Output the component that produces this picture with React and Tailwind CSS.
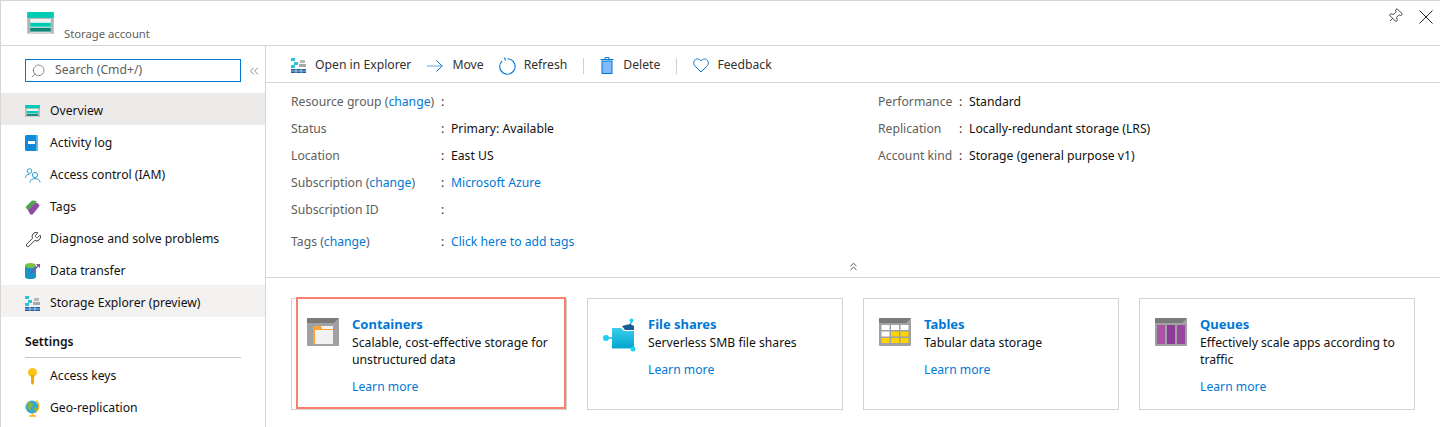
import React from "react";
import { Search, ChevronsLeft, ChevronsUp, Pin, Wrench } from "lucide-react";

const font = "font-['Noto_Sans','Open_Sans',sans-serif]";

function StorageIcon({ size = 27 }) {
  return (
    <svg width={size} height={size * 0.8} viewBox="0 0 27 22" className="block">
      <rect x="0" y="1" width="27" height="21" fill="#b3b3b3" />
      <rect x="0" y="0" width="27" height="6" fill="#00ccb4" />
      <rect x="3" y="7" width="21" height="14" fill="#f2f2f2" />
      <rect x="3" y="11" width="21" height="4" fill="#00ccb4" />
      <rect x="3" y="16" width="21" height="4" fill="#11867a" />
    </svg>
  );
}

function ExplorerIcon() {
  return (
    <svg width="15" height="15" viewBox="0 0 15 15" className="block">
      <rect x="0" y="0" width="4" height="3" fill="#32bedd" />
      <rect x="3" y="4" width="4" height="3" fill="#32bedd" />
      <rect x="0" y="7" width="4" height="3" fill="#32bedd" />
      <rect x="9" y="2" width="5" height="3" fill="#b8b8b8" />
      <rect x="8" y="6" width="7" height="3" fill="#a8a8a8" />
      <rect x="0" y="11" width="15" height="4" fill="#1f5fa8" />
      <path d="M5 11v4M10 11v4M0 13h15" stroke="#fff" strokeWidth="0.6" />
    </svg>
  );
}

function ActivityIcon() {
  return (
    <svg width="13" height="16" viewBox="0 0 13 16" className="block">
      <rect x="0" y="0" width="13" height="16" rx="1.5" fill="#0f8ad8" />
      <rect x="11" y="0" width="2" height="16" fill="#5cb6ec" />
      <rect x="3" y="6" width="7" height="3" fill="#fff" />
    </svg>
  );
}

function UsersIcon() {
  return (
    <svg width="16" height="15" viewBox="0 0 16 15" fill="none" stroke="#2a9fd6" strokeWidth="1" className="block">
      <circle cx="4.5" cy="3" r="2.3" />
      <path d="M0.5 10c0-2.5 1.5-3.7 4-3.7" />
      <circle cx="10" cy="7" r="2.6" />
      <path d="M5 14.500c0-2.600 2-3.800 5-3.800s5 1.200 5 3.800" />
    </svg>
  );
}

function TagIcon() {
  return (
    <svg width="15" height="15" viewBox="0 0 15 15" className="block">
      <path d="M0.500 7 L7 0.500 L12 1 L3 10.500 Z" fill="#4aa84a" />
      <path d="M3 10 L10 3 C11 2 14 3 14.500 6 L8 14 C7 15 6 15 5 14 Z" fill="#8e4aa5" />
    </svg>
  );
}

function TransferIcon() {
  return (
    <svg width="16" height="16" viewBox="0 0 16 16" className="block">
      <path d="M0 3h11v11c0 1.500-2.500 2-5.500 2S0 15.500 0 14z" fill="#1b93c4" />
      <ellipse cx="5.500" cy="2.500" rx="5.500" ry="2.500" fill="#7cc242" />
      <path d="M6 10L14 2" stroke="#8e4aa5" strokeWidth="1.500" />
      <path d="M11 1h4v4z" fill="#8e4aa5" />
    </svg>
  );
}

function KeyIcon() {
  return (
    <svg width="11" height="17" viewBox="0 0 11 17" className="block">
      <circle cx="5.500" cy="4.500" r="4.500" fill="#fcc419" />
      <path d="M4 7h3v8l-1.500 2L4 15z" fill="#f0a70a" />
    </svg>
  );
}

function GlobeIcon() {
  return (
    <svg width="15" height="17" viewBox="0 0 15 17" className="block">
      <circle cx="7" cy="7" r="6.500" fill="#38a5db" />
      <path d="M3 2.500c3-1 5 0 5 2s-2 2-2 4-2 2-3 0-2-5 0-6zM9 8c2-1 4 0 3 2s-3 2-3-2z" fill="#7cb83e" />
      <path d="M11 0.500c4 3 4 9-1 12.500" stroke="#f2b61e" strokeWidth="1.200" fill="none" />
      <path d="M4 16h7M7.500 13v3" stroke="#f2b61e" strokeWidth="1.500" />
    </svg>
  );
}

function MoveIcon() {
  return (
    <svg width="16" height="12" viewBox="0 0 16 12" fill="none" className="block">
      <path d="M0 6H15" stroke="#7ab3ea" strokeWidth="1.200" />
      <path d="M9.500 0.500L15.200 6L9.500 11.500" stroke="#0078d4" strokeWidth="1" />
    </svg>
  );
}

function RefreshIcon() {
  return (
    <svg width="17" height="18" viewBox="0 0 17 18" fill="none" stroke="#0078d4" strokeWidth="1.100" className="block">
      <path d="M3.200 3.800A7.700 7.700 0 1 0 8.500 1.800" />
      <path d="M5.500 0.500L6.500 3.500" />
    </svg>
  );
}

function DeleteIcon() {
  return (
    <svg width="14" height="17" viewBox="0 0 14 17" className="block">
      <rect x="2" y="4" width="10" height="12.500" fill="#83b9f9" stroke="#0078d4" />
      <path d="M0.500 2.500H13.500M5 2.500V0.500H9V2.500" stroke="#0078d4" fill="none" />
    </svg>
  );
}

function HeartIcon() {
  return (
    <svg width="16" height="15" viewBox="0 0 16 15" fill="none" stroke="#0078d4" strokeWidth="1" className="block">
      <path d="M8 14L1.500 7.500C-0.500 4.500 1.500 1 4.500 1C6 1 7.500 2 8 3C8.500 2 10 1 11.500 1C14.500 1 16.500 4.500 14.500 7.500Z" />
    </svg>
  );
}

function CloseIcon() {
  return (
    <svg width="14" height="14" viewBox="0 0 14 14" stroke="#222" strokeWidth="1" className="block">
      <path d="M0.500 0.500L13.500 13.500M13.500 0.500L0.500 13.500" />
    </svg>
  );
}

function ContainersIcon() {
  return (
    <svg width="32" height="28" viewBox="0 0 32 28" className="block">
      <rect width="32" height="28" rx="1" fill="#a0a1a2" />
      <path d="M0 5V1q0-1 1-1h31l-5 5z" fill="#7a7a7a" />
      <rect x="6" y="8" width="20" height="18" fill="#f2f2f2" />
      <path d="M6 26V8h8l1 3h11v1H8v14z" fill="#ffa133" />
    </svg>
  );
}

function FilesIcon() {
  return (
    <svg width="34" height="34" viewBox="0 0 34 34" className="block">
      <defs>
        <linearGradient id="fileGrad" x1="0" y1="0" x2="0" y2="1">
          <stop offset="0" stopColor="#3dcde8" />
          <stop offset="1" stopColor="#00a6cf" />
        </linearGradient>
      </defs>
      <path d="M29 3L26 9M5 20h5M28 27l2 4" stroke="#0078b8" strokeWidth="1" />
      <path d="M19 8l8-2 4 2v4H22z" fill="#195a96" />
      <path d="M9 10h9l3 3h10v17H9z" fill="url(#fileGrad)" />
      <rect x="9" y="30" width="22" height="1" fill="#8fd8ea" />
      <circle cx="28.500" cy="2.500" r="2" fill="#19d3f0" />
      <circle cx="3" cy="20" r="3" fill="#19d3f0" />
      <circle cx="30" cy="31" r="2.500" fill="#19d3f0" />
    </svg>
  );
}

function TablesIcon() {
  const cells = [
    "#fff", "#fff", "#fff",
    "#fff", "#ffd400", "#ffd400",
    "#ffd400", "#ffd400", "#ffd400",
  ];
  return (
    <svg width="32" height="28" viewBox="0 0 32 28" className="block">
      <rect width="32" height="28" rx="1" fill="#a0a1a2" />
      <path d="M0 5V1q0-1 1-1h31l-5 5z" fill="#7a7a7a" />
      {cells.map((c, i) => (
        <rect key={i} x={2.500 + (i % 3) * 9.500} y={7 + Math.floor(i / 3) * 6.500} width="8" height="5" fill={c} />
      ))}
    </svg>
  );
}

function QueuesIcon() {
  return (
    <svg width="32" height="28" viewBox="0 0 32 28" className="block">
      <rect width="32" height="28" rx="1" fill="#a0a1a2" />
      <path d="M0 5V1q0-1 1-1h31l-5 5z" fill="#7a7a7a" />
      <rect x="2" y="7" width="8" height="19" fill="#a855a8" />
      <rect x="12" y="7" width="8" height="19" fill="#8c3a98" />
      <rect x="22" y="7" width="8" height="19" fill="#9a46a0" />
    </svg>
  );
}

const nav = [
  { label: "Overview", icon: <StorageIcon size={15} />, cls: "bg-[#edebe9]" },
  { label: "Activity log", icon: <ActivityIcon /> },
  { label: "Access control (IAM)", icon: <UsersIcon /> },
  { label: "Tags", icon: <TagIcon /> },
  { label: "Diagnose and solve problems", icon: <Wrench size={17} strokeWidth={1.2} className="text-[#222]" /> },
  { label: "Data transfer", icon: <TransferIcon /> },
  { label: "Storage Explorer (preview)", icon: <ExplorerIcon />, cls: "bg-[#f3f2f1]" },
];

function Link({ children }) {
  return <span className="text-[#0078d4]">{children}</span>;
}

function Sidebar() {
  return (
    <aside className="w-[265px] shrink-0 h-[381px] border-r border-[#d6d6d6] overflow-hidden">
      <div className="flex items-center pl-[24px] pt-[13px] pb-[11px]">
        <div className="w-[216px] h-[23px] border border-[#0078d4] flex items-center pl-[4px] text-[#605e5c]">
          <Search size={16} strokeWidth={1} className="-scale-x-100 text-[#555]" />
          <span className="ml-[9px]">Search (Cmd+/)</span>
        </div>
        <ChevronsLeft size={14} strokeWidth={1.2} className="ml-[6px] text-[#555]" />
      </div>
      {nav.map((n) => (
        <div key={n.label} className={`h-[32px] pt-[4px] flex items-center pl-[24px] text-[#111] ${n.cls || ""}`}>
          <span className="w-[25px] flex items-center">{n.icon}</span>
          {n.label}
        </div>
      ))}
      <div className="mx-[24px] mt-[16px] h-[25px] border-b border-[#c8c8c8] font-semibold text-[#111]">Settings</div>
      <div className="h-[32px] pt-[4px] flex items-center pl-[24px] text-[#111]">
        <span className="w-[25px] flex items-center pl-[2px]"><KeyIcon /></span>Access keys
      </div>
      <div className="h-[32px] pt-[4px] flex items-center pl-[24px] text-[#111]">
        <span className="w-[25px] flex items-center"><GlobeIcon /></span>Geo-replication
      </div>
    </aside>
  );
}

function Toolbar() {
  return (
    <div className="h-[37px] pt-[3px] border-b border-[#d6d6d6] flex items-center pl-[25px] text-[#323130]">
      <ExplorerIcon />
      <span className="ml-[9px]">Open in Explorer</span>
      <span className="ml-[16px]"><MoveIcon /></span>
      <span className="ml-[9px]">Move</span>
      <span className="ml-[15px]"><RefreshIcon /></span>
      <span className="ml-[8px]">Refresh</span>
      <span className="w-px h-[16px] bg-[#d0d0d0] ml-[16px]" />
      <span className="ml-[16px]"><DeleteIcon /></span>
      <span className="ml-[9px]">Delete</span>
      <span className="w-px h-[16px] bg-[#d0d0d0] ml-[16px]" />
      <span className="ml-[16px]"><HeartIcon /></span>
      <span className="ml-[8px]">Feedback</span>
    </div>
  );
}

function Row({ label, value, h = "h-[27px]" }) {
  return (
    <div className={`${h} flex items-center`}>
      <span className="w-[150px] shrink-0 text-[#605e5c]">{label}</span>
      <span className="w-[10px] shrink-0 text-[#323130]">:</span>
      <span className="text-[#111]">{value}</span>
    </div>
  );
}

function SideRow({ label, value }) {
  return (
    <div className="h-[27px] flex items-center">
      <span className="w-[81px] text-[#605e5c]">{label}</span>
      <span className="w-[10px] text-[#323130]">:</span>
      <span className="text-[#111]">{value}</span>
    </div>
  );
}

function Essentials() {
  return (
    <div className="h-[195px] border-b border-[#d6d6d6] relative pl-[25px] pt-[6px] flex">
      <div className="w-[587px]">
        <Row label={<>Resource group (<Link>change</Link>)</>} />
        <Row label="Status" value="Primary: Available" />
        <Row label="Location" value="East US" />
        <Row label={<>Subscription (<Link>change</Link>)</>} value={<Link>Microsoft Azure</Link>} />
        <Row label="Subscription ID" />
        <Row h="h-[37px]" label={<>Tags (<Link>change</Link>)</>} value={<Link>Click here to add tags</Link>} />
      </div>
      <div>
        <SideRow label="Performance" value="Standard" />
        <SideRow label="Replication" value="Locally-redundant storage (LRS)" />
        <SideRow label="Account kind" value="Storage (general purpose v1)" />
      </div>
      <ChevronsUp size={13} strokeWidth={1.4} className="absolute left-[581px] top-[177px] text-[#222]" />
    </div>
  );
}

function Card({ icon, title, desc, width, children }) {
  return (
    <div className={`${width} h-[112px] border border-[#d2d2d2] shrink-0 flex relative`}>
      <div className="w-[60px] pl-[15px] pt-[19px] shrink-0">{icon}</div>
      <div className="pt-[16px]">
        <div className="font-bold text-[#0078d4] text-[13px] leading-[19px]">{title}</div>
        <div className="text-[#111] w-[205px] leading-[17px]">{desc}</div>
        <div className="mt-[10px] text-[#0078d4] leading-[17.5px]">Learn more</div>
      </div>
      {children}
    </div>
  );
}

export default function App() {
  return (
    <div className={`w-[1440px] h-[427px] overflow-hidden bg-white border-t border-l border-[#d6d6d6] text-[12.2px] ${font}`}>
      <div className="h-[45px] border-b border-[#d6d6d6] flex relative">
        <div className="pl-[26px] pt-[11px]"><StorageIcon /></div>
        <span className="ml-[10px] mt-[25px] text-[11.25px] text-[#605e5c]">Storage account</span>
        <Pin size={16} strokeWidth={1.1} className="absolute left-[1386px] top-[7px] rotate-45 text-[#111]" />
        <span className="absolute left-[1418px] top-[9px]"><CloseIcon /></span>
      </div>
      <div className="flex">
        <Sidebar />
        <main className="flex-1 min-w-0">
          <Toolbar />
          <Essentials />
          <div className="flex gap-[20px] pl-[25px] pt-[20px]">
            <Card width="w-[276px]" icon={<ContainersIcon />} title="Containers" desc="Scalable, cost-effective storage for unstructured data">
              <div className="absolute left-[4px] -top-[2px] w-[270px] h-[112px] border-2 border-[#f8806f]" />
            </Card>
            <Card width="w-[256px]" icon={<FilesIcon />} title="File shares" desc="Serverless SMB file shares" />
            <Card width="w-[256px]" icon={<TablesIcon />} title="Tables" desc="Tabular data storage" />
            <Card width="w-[276px]" icon={<QueuesIcon />} title="Queues" desc="Effectively scale apps according to traffic" />
          </div>
        </main>
      </div>
    </div>
  );
}
